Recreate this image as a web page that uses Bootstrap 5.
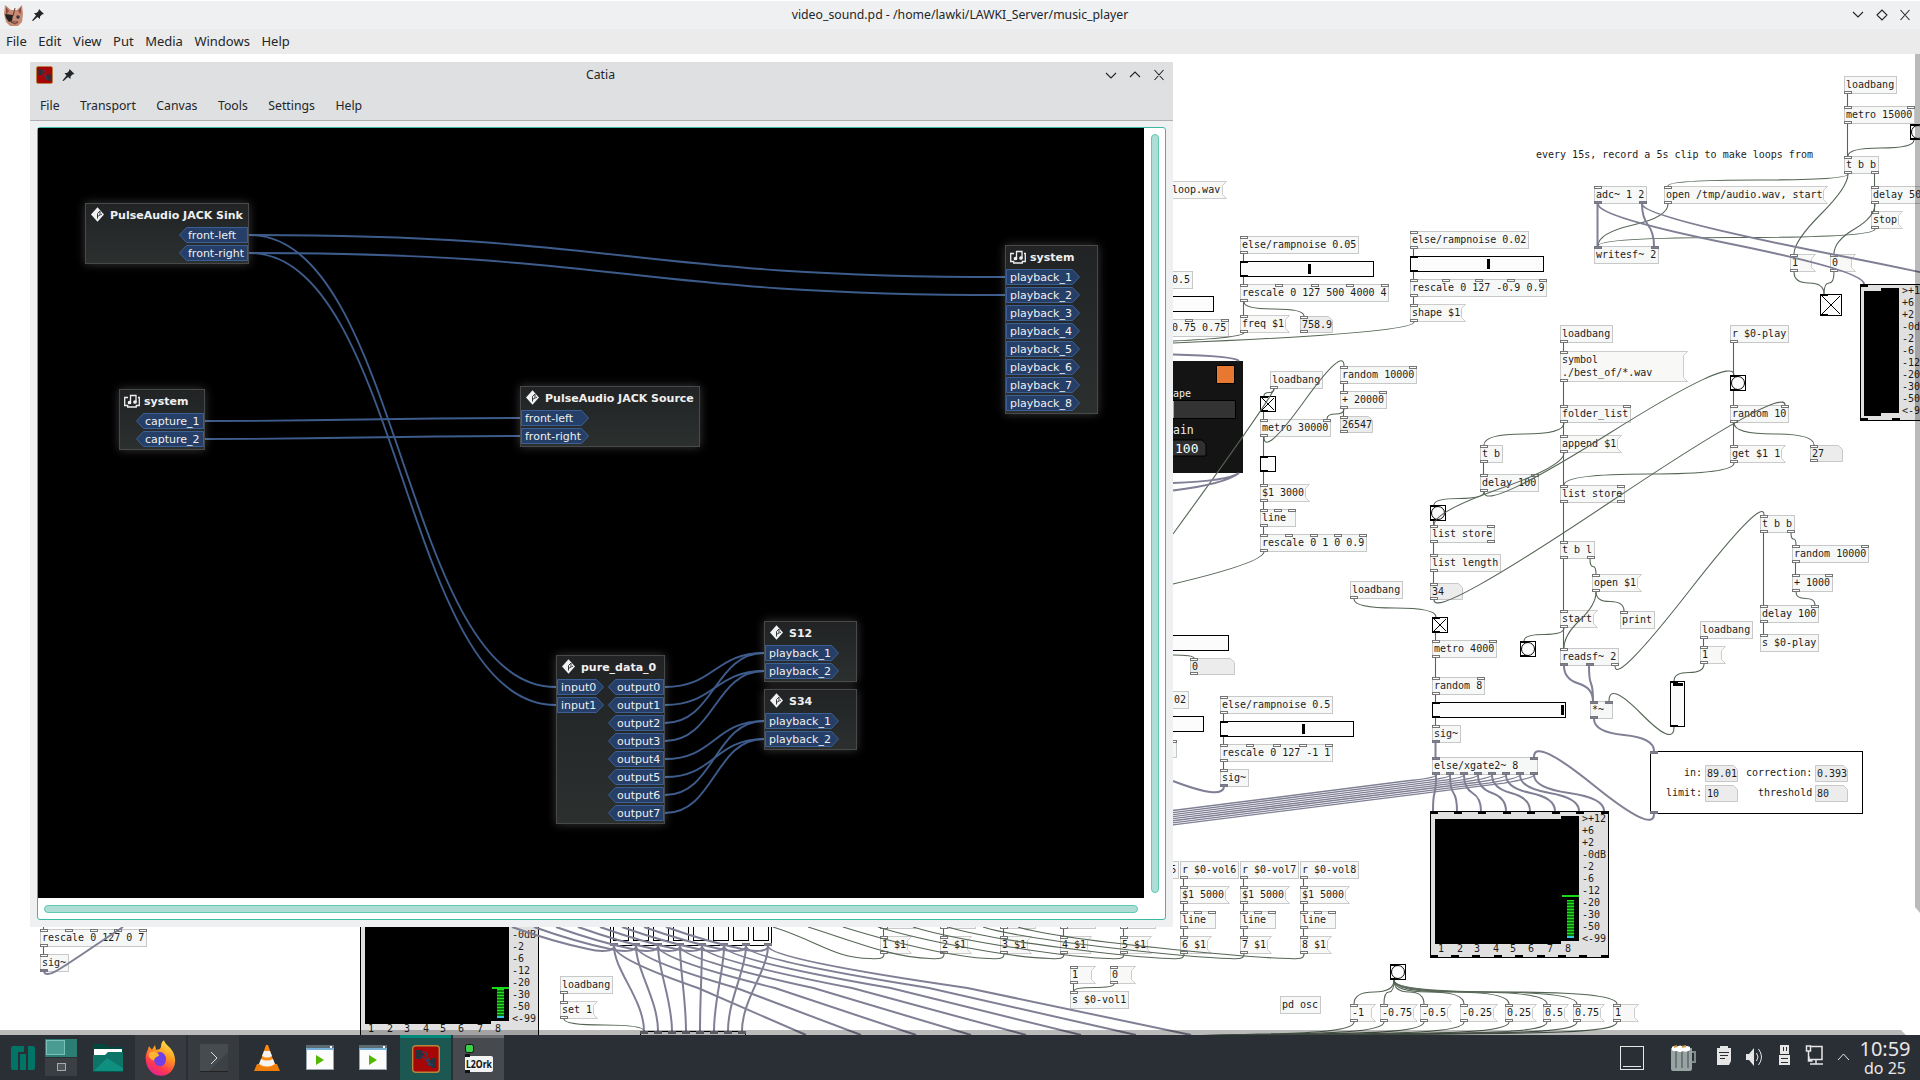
<!DOCTYPE html>
<html lang="en">
<head>
<meta charset="utf-8">
<title>video_sound.pd</title>
<link href="https://cdn.jsdelivr.net/npm/bootstrap@5.3.0/dist/css/bootstrap.min.css" rel="stylesheet">
<style>
body{width:1920px;height:1080px;overflow:hidden;font:13px/1.2 "Noto Sans",sans-serif;color:#232629;background:#fff}
.pd-title{height:29px;background:#eff0f1;border-top:1px solid #fff}
.pd-name{font-size:12.250px}
.pd-menu{height:25px;background:#ebebeb;gap:11.500px;padding-left:6px}
.side{width:120px}
.pd-buttons{padding-right:10px}
.desk{height:981px}
.patch{position:absolute;left:0;top:-54px}
.patch text{font:10px "DejaVu Sans Mono",monospace;fill:#1c1c1c;white-space:pre}
.obj{fill:#f6f8f8;stroke:#c8c8c8}
.msg{fill:#f8f8f6;stroke:#ccc}
.num{fill:#ececec;stroke:#c8c8c8}
.gui{fill:#fcfcfc;stroke:#000}
.io{fill:#fff;stroke:#757575}
.sio{fill:#808093;stroke:#757580}
.wire{fill:none;stroke:#566656;stroke-width:1.1}
.sig{fill:none;stroke:#7f7f95;stroke-width:2}
.fan{fill:none;stroke:#7f7f95;stroke-width:1.35}
.catia{position:absolute;left:30px;top:8px;width:1143px;height:865px;background:#eff0f1;font-size:12.250px}
.catia-head{height:59px;background:#dfe0e2;border-bottom:1px solid #aeb0b2}
.catia-title{height:26px;padding:0 8px 0 6px}
.catia-menu{gap:20.500px;padding:3px 0 0 10px;height:33px}
.frame{margin:6px 7px 7px;height:793px;border:1px solid #3cb9a2;border-radius:3px;background:#fff}
.jack{width:1106px;height:770px;background:#000}
.jack svg.links{position:absolute;left:0;top:0}
.vbar{width:8px;height:759px;margin:6px 0 0 7px;border:1px solid #5ecab4;border-radius:4px;background:#afded7}
.hbar{width:1094px;height:8px;margin:7px 0 0 6px;border:1px solid #5ecab4;border-radius:4px;background:#afded7}
.client{position:absolute;border:1px solid #47494b;background:linear-gradient(#212325,#2b302f);box-shadow:0 0 9px rgba(255,255,255,.22);font:11px/16px "DejaVu Sans",sans-serif;color:#f0f0f0}
.client .head{height:23px;padding-left:4px;font-weight:bold}
.client .head svg{width:16px;height:15px;margin:-2px 4px 0 0;overflow:visible}
.ports{gap:2px}
.port{position:relative;height:16px;padding:1px 0 0 4px;font-size:11px}
.port-out{padding-left:9px}
.port svg{position:absolute;left:0;top:0}
.port span{position:relative}
.task{height:45px;background:#2a2e35;color:#e8e8e8}
.tile{width:51px;height:45px;margin-right:2px}
.tile-open{background:#373b40}
.tile-l2{background:#46494d;border-top:3px solid #6c6f73}
.tile-catia{background:#1c5752;border-top:3px solid #00897b}
.clock{width:62px;text-align:center}
.clock .hr{font-size:20px;line-height:21px}.clock .dt{font-size:16px;line-height:18px}
</style>
<script src="https://cdn.jsdelivr.net/npm/bootstrap@5.3.0/dist/js/bootstrap.bundle.min.js"></script>
</head>
<body class="d-flex flex-column">
<header class="pd-title d-flex align-items-center justify-content-between flex-shrink-0">
  <div class="side d-flex align-items-center ps-1">
    <svg width="20" height="21" viewBox="0 0 20 21"><path d="M1 0L7 5h6l5-5 1 9-1 8-4 4H6l-4-4-2-8z" fill="#c78a72"/><path d="M2 2l3 4-3 4zM17 2l-3 4 3 3z" fill="#8c4c40"/><path d="M1 9l8 1-1 6-3 1-3-4z" fill="#222"/><circle cx="14" cy="12" r="1.7" fill="#334"/><path d="M11 3L9 11M7 17h7l-3 2z" stroke="#613a32" fill="#e3a69a"/></svg>
    <svg class="ms-2" width="12" height="12" viewBox="0 0 12 12"><path d="M7 0l5 5-2 .5-2 2L8 10 5.500 8 1 12 0 11.500 4 6.500 2 4l2.500 0 2-2z" fill="#232629"/></svg>
  </div>
  <div class="pd-name">video_sound.pd - /home/lawki/LAWKI_Server/music_player</div>
  <div class="side pd-buttons d-flex justify-content-end">
    <svg width="58" height="14" fill="none" stroke="#232629" stroke-width="1.1"><path d="M1 4l5 5 5-5M25 7l5-5 5 5-5 5zM48.500 2l9 10M57.500 2l-9 10"/></svg>
  </div>
</header>
<nav class="pd-menu d-flex align-items-center flex-shrink-0"><span>File</span><span>Edit</span><span>View</span><span>Put</span><span>Media</span><span>Windows</span><span>Help</span></nav>
<main class="desk position-relative overflow-hidden flex-shrink-0">
  <svg class="patch" id="patch" width="1920" height="1080"></svg>
  <section class="catia">
    <div class="catia-head">
      <div class="catia-title d-flex align-items-center justify-content-between">
        <div class="side d-flex align-items-center">
          <svg width="17" height="18" viewBox="0 0 28 28" preserveAspectRatio="none"><use href="#catiaIcon"/></svg>
          <svg class="ms-2" width="15" height="12" viewBox="-1 0 14 12"><path d="M7 0l5 5-2 .5-2 2L8 10 5.500 8 1 12 0 11.500 4 6.500 2 4l2.500 0 2-2z" fill="#232629"/></svg>
        </div>
        <div>Catia</div>
        <div class="side d-flex justify-content-end">
          <svg width="60" height="14" fill="none" stroke="#232629" stroke-width="1.1"><path d="M1 5l5 5 5-5M25 9l5-5 5 5M49.500 2l9 10M58.500 2l-9 10"/></svg>
        </div>
      </div>
      <nav class="catia-menu d-flex align-items-center"><span>File</span><span>Transport</span><span>Canvas</span><span>Tools</span><span>Settings</span><span>Help</span></nav>
    </div>
    <div class="frame">
      <div class="d-flex">
        <div class="jack position-relative overflow-hidden" id="jack"><svg class="links" id="links" width="1106" height="770"></svg></div>
        <div class="vbar"></div>
      </div>
      <div class="hbar"></div>
    </div>
  </section>
</main>
<footer class="task d-flex justify-content-between flex-shrink-0">
  <div class="d-flex">
    <svg width="135" height="45">
      <path d="M11 13q0-2 2-2h11v6h-6v18h-5q-2 0-2-2zM20 19h6v16h-6zM28 11h5q2 0 2 2v20q0 2-2 2h-5z" fill="#007466"/>
      <rect x="45" y="4" width="32" height="18" fill="#2c7e74"/><rect x="46.500" y="5.500" width="18" height="14" fill="#4a9b92" stroke="#7ac2b9"/>
      <rect x="45" y="23" width="32" height="18" fill="#3b3f44"/><rect x="57.500" y="28.500" width="8" height="7" fill="#4f5458" stroke="#aaa"/>
      <path d="M93 9h12l3 3h15v12H93z" fill="#00483f"/><path d="M94 14h28v8H94z" fill="#fff"/><path d="M93 20h12l3-3h15v20H93z" fill="#0c7568"/><path d="M93 37l14-14 16 10v4z" fill="#0f8f80"/><path d="M93 36h30v1H93z" fill="#00594f"/>
    </svg>
    <div class="tile tile-open d-flex align-items-center justify-content-center">
      <svg width="31" height="38" viewBox="0 0 31 32" preserveAspectRatio="none"><defs><linearGradient id="ff" x1=".8" y1="0" x2=".3" y2="1"><stop offset="0" stop-color="#fff44f"/><stop offset=".4" stop-color="#ff9a1f"/><stop offset=".75" stop-color="#ff3750"/><stop offset="1" stop-color="#e0209a"/></linearGradient></defs><path d="M19 1c1 4 8 6 10 12 4 9-3 18-13 18S-1 22 1 13c1-3 2-4 3-7l3 3 3-4 1 4c3 0 5-1 5-3s1-4 3-5z" fill="url(#ff)"/><circle cx="15" cy="17" r="6" fill="#6f3fe8"/><path d="M4 12c5-3 10 0 10 2-2 1-4 1-5 4-4-1-6-3-5-6z" fill="#ffb52e"/></svg>
    </div>
    <div class="tile tile-open d-flex align-items-center justify-content-center">
      <svg width="28" height="28"><rect width="28" height="28" fill="#454b4f"/><path d="M8 28L28 8v20z" fill="#3b4145"/><path d="M0 27.500h28" stroke="#222"/><path d="M11 8l6 6-6 6" fill="none" stroke="#ddd"/></svg>
    </div>
    <div class="tile d-flex align-items-center justify-content-center">
      <svg width="26" height="28"><path d="M3 20h20l3 7H0z" fill="#ef7d0c"/><path d="M12 1h2l7 20q-8 5-16 0z" fill="#ff8a12"/><path d="M10 7h6l2 5q-5 3-10 0zM7 15q6 3 12 0l2 5q-8 5-16 0z" fill="#f4f4f4"/></svg>
    </div>
    <div class="tile d-flex align-items-center justify-content-center"><svg width="28" height="25"><rect width="28" height="25" fill="#9aa5ab"/><rect x="1" y="5" width="26" height="19" fill="#fcfcfc"/><path d="M0 1.500h28" stroke="#5c6a72" stroke-width="3"/><path d="M0 4h28" stroke="#6cb6e6" stroke-width="1.500"/><rect x="24" y="1" width="2" height="2" fill="#fff"/><path d="M10 10l8 5-8 5z" fill="#54b800"/></svg></div>
    <div class="tile d-flex align-items-center justify-content-center"><svg width="28" height="25"><rect width="28" height="25" fill="#9aa5ab"/><rect x="1" y="5" width="26" height="19" fill="#fcfcfc"/><path d="M0 1.500h28" stroke="#5c6a72" stroke-width="3"/><path d="M0 4h28" stroke="#6cb6e6" stroke-width="1.500"/><rect x="24" y="1" width="2" height="2" fill="#fff"/><path d="M10 10l8 5-8 5z" fill="#54b800"/></svg></div>
    <div class="tile tile-catia d-flex align-items-center justify-content-center">
      <svg width="28" height="28" viewBox="0 0 28 28"><g id="catiaIcon"><rect x=".7" y=".7" width="26.600" height="26.600" rx="3" fill="#a60606" stroke="#b8863b" stroke-width="1.400"/><path d="M4 5h6v3h2v3h-2v3H4zM17 15h2v-2h5v10h-5v-2h-3v-3h1z" fill="#26323e"/><path d="M10 6.500l4 1.500 4 11 3 1M10 12l3 1 5 8" stroke="#2c4468" stroke-width="1.300" fill="none"/></g></svg>
    </div>
    <div class="tile tile-l2 d-flex align-items-center justify-content-center">
      <svg width="28" height="32"><rect x="0.500" y="1.500" width="8" height="8" rx="2" fill="#3ecf4a" stroke="#111"/><rect x="0" y="13" width="28" height="16" rx="2" fill="#f2f2f2"/><path d="M0 11h5v3H0zM0 27h5v3H0z" fill="#111"/><text x="1" y="25" font-family="Noto Sans" font-size="10" font-weight="700" textLength="26" lengthAdjust="spacingAndGlyphs" fill="#111">L2Ork</text></svg>
    </div>
  </div>
  <svg width="240" height="45" class="ms-auto" fill="none" stroke="#e6e6e6">
    <rect x="2.500" y="11.500" width="23" height="23"/><path d="M5 31.500h18"/>
    <g stroke="none"><path d="M53 13h21v21q0 2-2 2H55q-2 0-2-2z" fill="#9aa3a3"/><path d="M57 16h2v17h-2zM63 16h2v17h-2zM69 16h2v17h-2z" fill="#6b7676"/><path d="M54 12q2-2 4 0 5-3 7 0 4-2 7 0v3q-4 3-7 1-3 2-6 0-4 1-5-1z" fill="#fff"/><path d="M56 12l3-1M64 12l4-1" stroke="#d49a4a" stroke-width="2"/></g><path d="M74 17h3v10h-3" stroke="#818a8a" stroke-width="2"/>
    <g stroke="none" fill="#e6e6e6"><path d="M99 13h14v13l-2 4H99zM102 11h8v4h-8z"/><path d="M128 19h3l5-6v18l-5-6h-3z"/><path d="M162 10h9v9h-9zM161 20h11v10h-11z"/></g>
    <path d="M101 17.500h10M102 20.500h8M102 23.500h5M163 23.500h7M163 27.500h7M165.500 12v4M168.500 12v4" stroke="#2a2e35"/>
    <path d="M138.500 18q3 4 0 8M140.500 14q6 8 0 16"/>
    <path d="M193 11.500h11v13h-13v-3M198 24v5M192 29h13M188.500 11v5h4v-5zM190.500 16v10h4" stroke-width="1.500"/><path d="M220 25l5.500-6L231 25"/>
  </svg>
  <div class="clock d-flex flex-column justify-content-center pe-2"><div class="hr">10:59</div><div class="dt">do 25</div></div>
</footer>
<script>
let s='';
const esc=t=>t.replace(/&/g,'&amp;').replace(/</g,'&lt;').replace(/>/g,'&gt;');
const R=(c,x,y,w,h)=>s+=`<rect class="${c}" x="${x+.5}" y="${y+.5}" width="${w-1}" height="${h-1}"/>`;
const F=(f,x,y,w,h)=>s+=`<rect fill="${f}" x="${x}" y="${y}" width="${w}" height="${h}"/>`;
const T=(x,y,t,st='')=>s+=`<text x="${x}" y="${y}" style="${st}">${esc(t)}</text>`;
// ports: string with one letter per port, c = control, s = signal
function ports(p,x,y,w){[...p].forEach((k,i)=>R(k=='s'?'sio':'io',Math.round(x+(p.length>1?i*(w-8)/(p.length-1):0)),y,8,3));}
function obj(x,y,t,i='c',o='c',w=t.length*6+5){R('obj',x,y,w,18);ports(i,x,y,w);ports(o,x,y+15,w);T(x+2,y+12,t);}
function msg(x,y,t,w=Math.max(26,t.length*6+8),h=18){const r=x+w-.5,a=x+.5,b=y+.5,e=y+h-.5;
 s+=`<path class="msg" d="M${a} ${b}H${r}L${r-4} ${b+4}V${e-4}L${r} ${e}H${a}z"/>`;ports('c',x,y,w);ports('c',x,y+h-3,w);
 t.split('\n').forEach((l,i)=>T(x+2,y+12+13*i,l));}
function num(x,y,t,w=33,p=1){const r=x+w-.5,a=x+.5,b=y+.5;s+=`<path class="num" d="M${a} ${b}H${r-4}L${r} ${b+4}V${b+16}H${a}z"/>`;if(p){ports('c',x,y,w);ports('c',x,y+14,w);}T(x+2,y+12,t);}
function hsl(x,y,k){R('gui',x,y,134,16);F('#000',x,y,8,2);F('#000',x,y+14,8,2);if(k){F('#000',k,y+3,3,10);}}
function tgl(x,y,on,d=16){R('gui',x,y,d,d);F('#000',x,y,8,2);F('#000',x,y+d-2,8,2);if(on)s+=`<path stroke="#000" d="M${x+2} ${y+2}L${x+d-2} ${y+d-2}M${x+d-2} ${y+2}L${x+2} ${y+d-2}"/>`;}
function bang(x,y){R('gui',x,y,16,16);s+=`<circle class="gui" cx="${x+8}" cy="${y+8}" r="6.500"/>`;F('#000',x,y,8,2);F('#000',x,y+14,8,2);}
const scale=(x,y)=>['>+12','+6','+2','-0dB','-2','-6','-12','-20','-30','-50','<-99'].forEach((l,i)=>T(x,y+11+12*i,l));
function vu(x,y,w,top,h,peak){F('#000',x,y,w,h);F('#e0e0e0',x+1,y+1,w-2,h-2);F('#000',x+5,y+8,126,125);F('#000',x+131,y+5,18,125);
 [0,24,48,73,97,122,146,171].forEach(d=>F('#000',x+d,y,8,3));[0,21,42,64,85,107,128,149,171].forEach(d=>F('#000',x+d,y+h-3,8,3));
 scale(x+152,y);
 [8,27,44,63,80,98,117,135].forEach((d,i)=>T(x+d,y+141,String(i+1)));
 F('#18d818',x+132,peak,17,2);for(let q=top;q<y+125;q+=3){F('#0a7a0a',x+137,q,7,3);F('#20e020',x+137,q,7,1);}F('#30c8e8',x+137,y+125,7,2);}
function L(x1,y1,x2,y2,g){if(x1==x2){s+=`<path class="${g?'sig':'wire'}" d="M${x1-.5} ${y1}V${y2}"/>`;return;}
 const dy=(y2-y1)/2,o=dy>0?Math.min(13,dy):20,mx=(x1+x2)/2,my=(y1+y2)/2;
 s+=`<path class="${g?'sig':'wire'}" d="M${x1} ${y1}Q${x1} ${y1+o} ${mx} ${my}T${x2} ${y2}"/>`;}
const W=(d,g)=>s+=`<path class="${g==2?'fan':g?'sig':'wire'}" d="${d}"/>`;

// left fragments beside the Catia window
msg(1164,181,' loop.wav',63);obj(1164,271,' 0.5','','',29);hsl(1080,296);obj(1164,319,' 0.75 0.75','','',65);ports('cc',1185,319,44);
obj(1240,236,'else/rampnoise 0.05');hsl(1240,261,1308);obj(1240,284,'rescale 0 127 500 4000 4','ccccc');msg(1240,315,'freq $1');num(1300,316,'758.9');
obj(1410,231,'else/rampnoise 0.02','c','c');hsl(1410,256,1487);obj(1410,279,'rescale 0 127 -0.9 0.9','ccccc');msg(1410,304,'shape $1');
// dark control panel
F('#141414',1150,361,93,112);F('#000',1216,365,19,19);F('#e87830',1217,366,17,17);F('#000',1150,400,86,19);F('#333',1150,401,85,17);F('#f0a020',1173,401,1,17);
T(1173,397,'ape','fill:#eee');T(1173,434,'ain','fill:#eee;font-size:11.500px');s+='<path d="M1150 440H1202l4 4v12h-56z" fill="#303030" stroke="#000"/>';T(1175,453,'100','fill:#fff;font-size:13px');
obj(1270,371,'loadbang','');tgl(1260,396,1);obj(1260,419,'metro 30000','cc');obj(1340,366,'random 10000','cc');obj(1340,391,'+ 20000','cc');num(1340,416,'26547');
tgl(1260,456);msg(1260,484,'$1 3000');obj(1260,509,'line','ccc','c',36);obj(1260,534,'rescale 0 1 0 0.9','ccccc');
obj(1480,445,'t b');obj(1480,474,'delay 100','cc');bang(1430,505);obj(1430,525,'list store','cc','cc');obj(1430,554,'list length');num(1430,583,'34');
// recorder
obj(1844,76,'loadbang','');obj(1844,106,'metro 15000','cc');bang(1910,124);obj(1844,156,'t b b','c','cc');T(1536,158,'every 15s, record a 5s clip to make loops from');
obj(1594,186,'adc~ 1 2','c','ss');msg(1664,186,'open /tmp/audio.wav, start');obj(1871,186,'delay 5000','cc');msg(1871,211,'stop');obj(1594,246,'writesf~ 2','ss','');
msg(1790,254,'1');msg(1830,254,'0');tgl(1820,294,1,22);
F('#000',1860,284,80,137);F('#e0e0e0',1861,285,78,135);F('#000',1864,291,17,125);F('#000',1881,288,18,125);F('#000',1860,284,8,3);F('#000',1860,418,8,3);F('#000',1892,418,8,3);scale(1902,283);
// player
obj(1560,325,'loadbang','');msg(1560,351,'symbol\n./best_of/*.wav',128,31);obj(1560,405,'folder_list','cc');msg(1560,435,'append $1');obj(1560,485,'list store','cc','cc');
obj(1560,541,'t b l','c','cc');msg(1592,574,'open $1');msg(1560,610,'start');obj(1620,611,'print','c','');obj(1560,648,'readsf~ 2','c','ssc');bang(1520,641);
obj(1730,325,'r $0-play','');bang(1730,375);obj(1730,405,'random 10','cc');msg(1730,445,'get $1 1');num(1810,445,'27');
obj(1760,515,'t b b','c','cc');obj(1792,545,'random 10000','cc');obj(1792,574,'+ 1000','cc');obj(1760,605,'delay 100','cc');obj(1760,634,'s $0-play','c','');
obj(1700,621,'loadbang','');msg(1700,646,'1');R('gui',1670,681,15,46);F('#000',1670,681,8,2);F('#000',1673,683,10,3);F('#000',1670,725,8,2);
obj(1350,581,'loadbang','');tgl(1432,617,1);obj(1432,640,'metro 4000','cc');obj(1432,677,'random 8','cc');hsl(1432,702,1561);obj(1432,725,'sig~','c','s');
obj(1432,757,'else/xgate2~ 8','ss','ssssssss',106);obj(1590,701,'*~','ss','s',23);
s+='<rect x="1650.500" y="751.500" width="212" height="62" fill="#fff" stroke="#000"/>';ports('s',1650,751,8);ports('s',1650,811,8);
T(1684,776,'in:');T(1746,776,'correction:');T(1666,796,'limit:');T(1758,796,'threshold');num(1705,765,'89.01',33,0);num(1815,765,'0.393',33,0);num(1705,785,'10',33,0);num(1815,785,'80',33,0);
vu(1430,811,179,900,147,895);
// lower left
hsl(1095,635);num(1190,658,'0',45);obj(1166,691,' 02','','',23);hsl(1070,716);obj(1160,740,'','','',17);ports('c',1169,740,8);
obj(1220,696,'else/rampnoise 0.5');hsl(1220,721,1302);obj(1220,744,'rescale 0 127 -1 1','ccccc');obj(1220,769,'sig~','c','s');
obj(1120,861,'r $0-vol5','');
for(let i=1;i<=8;i++){const x=820+60*i;if(i>5){obj(x,861,'r $0-vol'+i,'');msg(x,886,'$1 5000');L(x+4,879,x+4,886);L(x+4,904,x+4,911);}
 obj(x,911,'line','ccc','c',36);msg(x,936,i+' $1');L(x+4,929,x+4,936);
 const a=x+4,e=738+35*i;W(`M${a} 954C${a} 959 ${a-5} 959 ${a-14} 958.500C${a-50} 958 ${e+45} 941 ${e} 927`);}
obj(40,929,'rescale 0 127 0 7','ccccc');obj(40,954,'sig~','c','s');vu(360,891,179,989,160,987);
obj(560,976,'loadbang','');msg(560,1001,'set 1');msg(1070,966,'1');msg(1110,966,'0');obj(1070,991,'s $0-vol1','c','');obj(1280,996,'pd osc','','');
R('gui',610,900,162,46);for(let i=0;i<8;i++){R('gui',613+20*i,900,16,41);}
ports('ssssssss',610,943,162);R('gui',640,1031,106,20);ports('ssssssss',640,1031,106);
bang(1390,964);
[[1350,'-1'],[1380,'-0.75'],[1420,'-0.5'],[1460,'-0.25'],[1505,'0.25'],[1543,'0.5'],[1573,'0.75'],[1613,'1']].forEach(([x,t])=>{msg(x,1004,t);L(1394,980,x+4,1004);W(`M${x+4} 1022C${x+4} 1036 ${x-100} 1033 1190 1036`);});

// control wires
[[1244,254,1244,261],[1244,277,1244,284],[1244,302,1244,315],[1244,302,1304,316],[1414,249,1414,256],[1414,272,1414,279],[1414,297,1414,304],
[1274,389,1264,396],[1264,412,1264,419],[1264,437,1264,456],[1264,437,1344,366],[1344,384,1344,391],[1344,409,1344,416],[1344,409,1327,419],[1264,472,1264,484],[1264,502,1264,509],[1264,527,1264,534],
[1484,463,1484,474],[1484,492,1434,505],[1484,492,1734,375],[1434,521,1434,525],[1434,543,1434,554],[1434,572,1434,583],[1434,600,1785,405],
[1848,94,1848,106],[1848,124,1848,156],[1914,140,1848,156],[1848,174,1668,186],[1848,174,1794,254],[1875,174,1875,186],[1875,204,1875,211],[1875,204,1834,254],[1875,229,1598,246],[1668,204,1598,246],[1794,272,1824,294],[1834,272,1824,294],
[1564,343,1564,351],[1564,382,1564,405],[1564,423,1564,435],[1564,423,1484,445],[1564,453,1564,485],[1564,453,1434,525],[1564,503,1564,541],[1564,559,1564,610],[1590,559,1596,574],[1596,592,1624,611],[1596,592,1564,648],[1564,628,1564,648],[1564,628,1524,641],[1615,666,1764,515],
[1734,343,1734,375],[1734,391,1734,405],[1734,423,1734,445],[1734,423,1814,445],[1734,463,1564,485],[1764,533,1764,605],[1791,533,1796,545],[1796,563,1796,574],[1796,592,1815,605],[1764,623,1764,634],[1704,639,1704,646],[1704,664,1674,681],[1674,727,1609,701],
[1354,599,1436,617],[1436,633,1436,640],[1436,658,1436,677],[1436,695,1436,702],[1436,718,1436,725],[1224,714,1224,721],[1224,737,1224,744],[1224,762,1224,769],[1074,984,1074,991],[1114,984,1074,991],[44,947,44,954],[44,920,44,929],[564,994,564,1001],[564,1019,644,1031]].forEach(a=>L(...a));
W('M1244 333Q1240 338 1173 341M1414 322Q1414 333 1173 343M1274 389Q1268 403 1173 534M1264 552Q1262 563 1173 584M1173 655Q1193 655 1194 658');
// signal wires
[[1598,204,1598,246],[1642,204,1654,246],[1598,204,1864,284],[1642,204,2040,308],[1564,666,1593,701],[1589,666,1593,701],[1594,719,1654,751],[1654,814,1534,757],[1436,743,1436,757]].forEach(a=>L(...a,1));
[0,24,48,73,97,122,146,171].forEach((d,i)=>{const x=1436+14*i;L(x,775,1433+d,811,1);W(`M${x} 775Q${x} 778 ${x-30} ${781+.3*i}L1173 ${810.500+2.050*i}`,2);});
W('M1173 354.500Q1235 356 1239 361M1239 473Q1228 481 1173 483M1239 473Q1225 484 1173 490.500M1173 781Q1222 800 1224 787M44 972C48 980 65 965 123 927',1);
for(let i=0;i<8;i++){const x=614+22*i,b=644+14*i,e=806+55*i;
 W(`M${x} 946C${x} 952 ${x-14} 952 ${x-26} 949Q${x-60} 942 ${x-102} 927`,1);
 W(`M${x} 946C${x} 970 ${b} 1000 ${b} 1031`,1);
 W(`M${x} 946Q${x} 959 ${(x+e)/2-12} 988L${e} 1035`,1);}
// canvas scrollbars
s+='<path d="M1915 54h5v859l-5-6zM0 1030h1901l5 5H0z" fill="#000" fill-opacity=".27"/>';
document.getElementById('patch').innerHTML=s;

// Catia canvas
const ox=38,oy=128,jack=document.getElementById('jack');
const dia='<svg viewBox="0 0 16 15"><path d="M7.500 .3l6.500 7.200-6.500 7.200L1 7.500z" fill="#f2f2f2"/><path d="M7.500 11.500V6.500L10 4v4L7.500 9.500M10.500 8l1.500-1" stroke="#33383a" stroke-width="1" fill="none"/></svg>';
const hw='<svg viewBox="0 0 16 15" fill="none" stroke="#f0f0f0" stroke-width="1.300"><path d="M4 4.500H.7v8h3v1.500h8.600v-1.500h3v-8H14"/><path d="M6.500 9.500V2.500h5.500v6.500"/><circle cx="5.500" cy="9.500" r="1.200" fill="#f0f0f0"/><circle cx="11" cy="9" r="1.200" fill="#f0f0f0"/></svg>';
function port(t,w,out){const d=out?`M.5 8L7.500 .5H${w-.5}V15.500H7.500z`:`M.5 .5H${w-7.500}L${w-.5} 8L${w-7.500} 15.500H.5z`;
 return `<div class="port ${out?'port-out':''}" style="width:${w}px"><svg width="${w}" height="16"><path d="${d}" fill="#253f68" stroke="#3d6094"/></svg><span>${t}</span></div>`;}
function client(x,y,w,h,ic,t,ins,iw,outs,ow){jack.insertAdjacentHTML('beforeend',`<div class="client" style="left:${x-ox}px;top:${y-oy}px;width:${w}px;height:${h}px"><div class="head d-flex align-items-center">${ic}<span>${t}</span></div><div class="d-flex justify-content-between"><div class="ports d-flex flex-column">${ins.map(p=>port(p,iw)).join('')}</div><div class="ports d-flex flex-column">${outs.map(p=>port(p,ow,1)).join('')}</div></div></div>`);}
const seq=(n,p,o=0)=>Array.from({length:n},(_,i)=>p+(i+o));
client(85,203,164,61,dia,'PulseAudio JACK Sink',[],0,['front-left','front-right'],69);
client(119,389,86,61,hw,'system',[],0,['capture_1','capture_2'],68);
client(520,386,180,61,dia,'PulseAudio JACK Source',['front-left','front-right'],68,[],0);
client(1005,245,93,169,hw,'system',seq(8,'playback_',1),74,[],0);
client(556,655,109,169,dia,'pure_data_0',seq(2,'input'),47,seq(8,'output'),56);
client(764,621,93,61,dia,'S12',seq(2,'playback_',1),74,[],0);
client(764,689,93,61,dia,'S34',seq(2,'playback_',1),74,[],0);
let k='';
[[249,235,1005,277],[249,253,1005,295],[249,235,556,687],[249,253,556,705],[205,421,520,418],[205,439,520,436],
[665,687,764,653],[665,705,764,671],[665,723,764,653],[665,741,764,671],[665,759,764,721],[665,777,764,739],[665,795,764,721],[665,813,764,739]].forEach(([a,b,c,d])=>{a-=ox;c-=ox;b-=oy;d-=oy;const m=(a+c)/2;k+=`<path d="M${a} ${b}C${m} ${b} ${m} ${d} ${c} ${d}" fill="none" stroke="#3d5c8c" stroke-width="1.900"/>`;});
document.getElementById('links').innerHTML=k;
</script>
</body>
</html>
